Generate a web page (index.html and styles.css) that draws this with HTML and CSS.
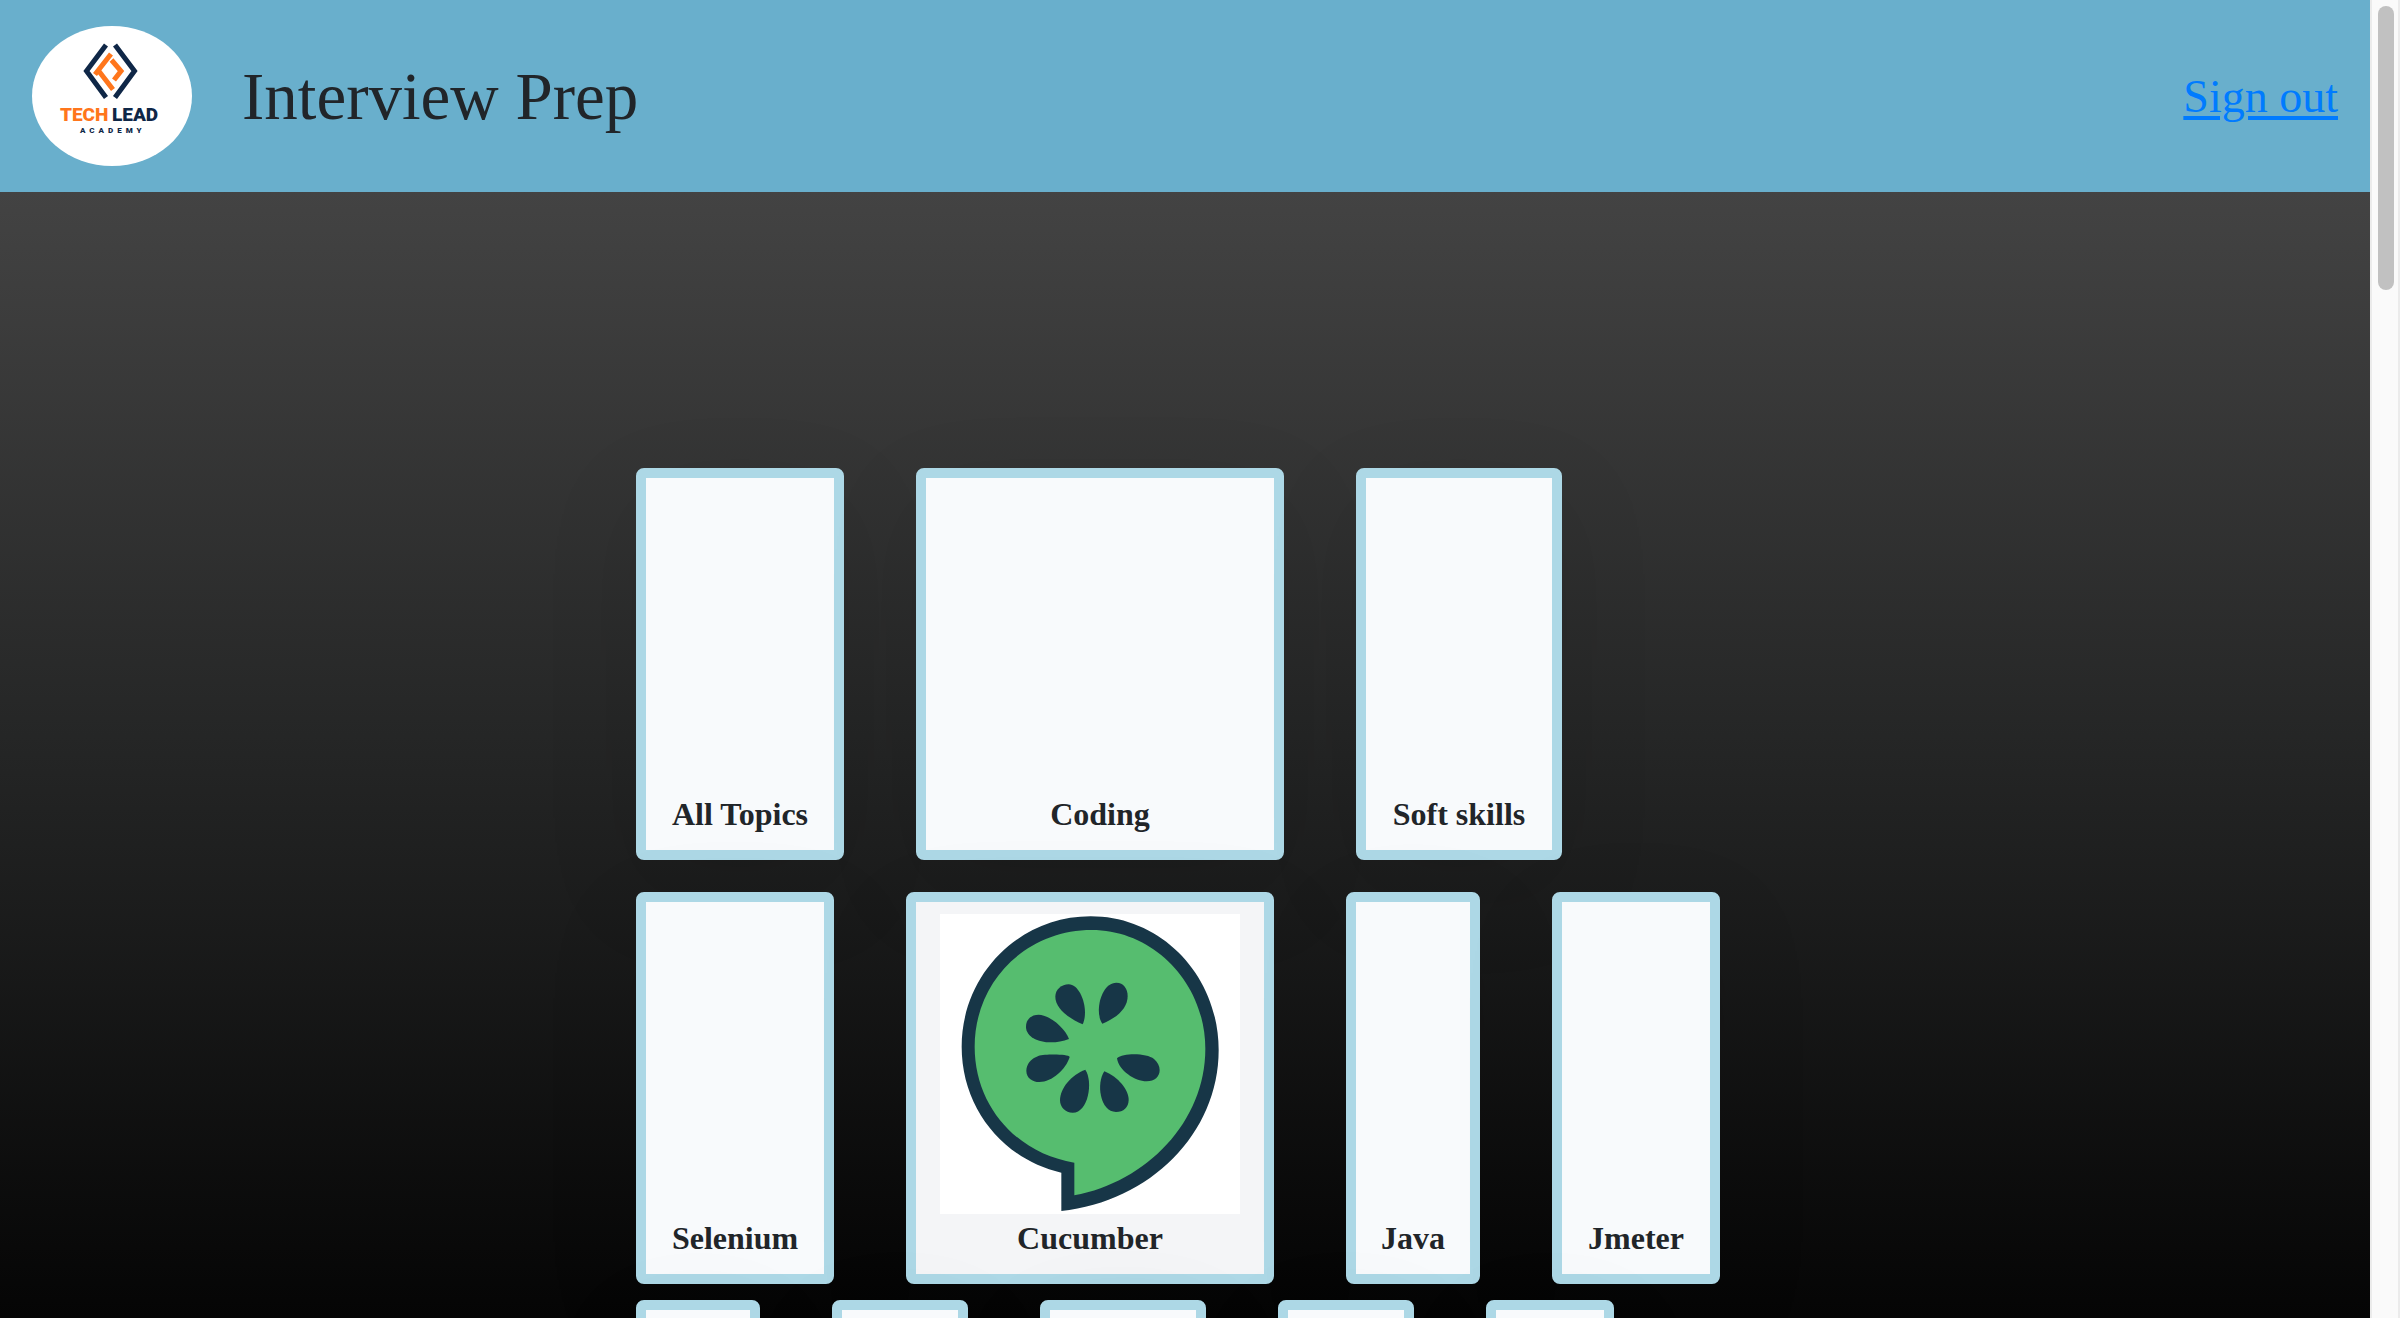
FILE: index.html
```html
<!DOCTYPE html>
<html lang="en">
<head>
<meta charset="utf-8">
<title>Interview Prep</title>
<link rel="stylesheet" href="styles.css">
</head>
<body>
<div class="page">
  <header class="header">
    <svg class="logo" viewBox="0 0 160 140" role="img" aria-label="Tech Lead Academy">
      <g fill="none" stroke-width="5" stroke="#0f2747">
        <path d="M74 19 54.500 45 74 71.500"/>
        <path d="M83 19 102.500 45 83 71.500"/>
      </g>
      <g fill="none" stroke-width="5" stroke="#ff761c">
        <path d="M79 28 63 48.500M66 44 81 63.500"/>
        <path d="M79.500 34 89 45 82 54"/>
      </g>
      <text class="logo-name logo-orange" x="28" y="95">TECH</text>
      <text class="logo-name" x="80" y="95">LEAD</text>
      <text class="logo-sub" x="48" y="107">ACADEMY</text>
    </svg>
    <h1 class="title">Interview Prep</h1>
    <a class="signout" href="#">Sign out</a>
  </header>
  <main class="main">
    <div class="topics">
      <div class="row row-lead">
        <a class="card w-208" href="#">All Topics</a>
        <a class="card w-368" href="#">Coding</a>
        <a class="card w-206" href="#">Soft skills</a>
      </div>
      <div class="row">
        <a class="card w-198" href="#">Selenium</a>
        <a class="card card-picture w-368" href="#">
          <svg class="picture" viewBox="180 132 900 900" aria-hidden="true">
            <path fill="#fff" d="M180 132h900v900H180z"/>
            <path fill="#173647" d="M544 1023V908C370 868 245 715 245 530C245 313 418 139 632 139C846 139 1016 318 1016 540C1016 790 810 995 544 1023Z"/>
            <path fill="#56bd6f" d="M583 976V878C410 850 284 708 284 530C284 332 440 180 635 180C822 180 976 340 976 536C976 755 800 935 583 976Z"/>
            <g fill="#173647">
              <path d="M608 463C560 442 526 412 526 380C526 358 545 343 566 343C602 343 628 420 608 463Z"/>
              <path d="M667 461C642 425 664 338 709 338C731 338 743 356 743 378C743 412 715 442 667 461Z"/>
              <path d="M567 507C556 475 508 434 476 434C454 434 438 448 438 470C438 512 508 530 567 507Z"/>
              <path d="M569 561C565 552 495 552 475 558C452 566 439 584 439 602C439 623 456 636 478 636C516 636 558 598 569 561Z"/>
              <path d="M616 599C640 635 625 728 578 728C556 728 540 712 540 690C540 655 574 614 616 599Z"/>
              <path d="M673 604C648 640 660 726 708 726C730 726 746 712 746 690C746 660 716 622 673 604Z"/>
              <path d="M711 565C730 548 800 549 822 567C833 576 839 588 839 600C839 620 824 634 800 634C765 634 716 602 711 565Z"/>
            </g>
          </svg>
          Cucumber
        </a>
        <a class="card w-134" href="#">Java</a>
        <a class="card w-168" href="#">Jmeter</a>
      </div>
      <div class="row">
        <div class="card w-124"></div>
        <div class="card w-136"></div>
        <div class="card w-166"></div>
        <div class="card w-136"></div>
        <div class="card w-128"></div>
      </div>
    </div>
  </main>
</div>
<div class="scrollbar" aria-hidden="true"><div class="thumb"></div></div>
</body>
</html>
```
FILE: styles.css
```css
* {
  box-sizing: border-box;
}

body {
  display: flex;
  height: 100vh;
  margin: 0;
  overflow: hidden;
  color: #212529;
  font-family: Baskerville, "Liberation Serif", serif;
}

.page {
  display: flex;
  flex: 1;
  flex-direction: column;
  min-width: 0;
}

.header {
  display: flex;
  flex-shrink: 0;
  align-items: center;
  padding: 26px 32px;
  background: #69afcc;
}

.logo {
  width: 160px;
  height: 140px;
  border-radius: 50%;
  background: #fff;
}

.logo-name {
  fill: #0f2747;
  font: 900 19px Roboto, sans-serif;
}

.logo-orange {
  fill: #ff761c;
}

.logo-sub {
  fill: #0f2747;
  font: 900 8px Roboto, sans-serif;
  letter-spacing: 4px;
}

.title {
  margin: 0 auto 0 50px;
  font-size: 67px;
  font-weight: 400;
  line-height: 80px;
}

.signout {
  color: #007bff;
  font-size: 46px;
  text-decoration-thickness: 4px;
  text-underline-offset: 4px;
}

.main {
  flex: 1;
  min-height: 0;
  padding-top: 276px;
  overflow: hidden;
  background: linear-gradient(#434343, #242525 50%, #050505);
}

.topics {
  display: flex;
  flex-direction: column;
  gap: 16px;
  max-width: 1098px;
  margin: 0 auto;
}

.row {
  display: flex;
  gap: 72px;
}

.row-lead {
  margin-bottom: 16px;
}

.card {
  position: relative;
  display: flex;
  flex-direction: column;
  flex-shrink: 0;
  align-items: center;
  justify-content: flex-end;
  height: 392px;
  padding: 12px 0;
  border: 10px solid #add8e6;
  border-radius: 8px;
  background: #f8fafc;
  box-shadow: 0 32px 96px rgba(0, 0, 0, 0.1);
  color: #212529;
  font-size: 32px;
  font-weight: 700;
  line-height: 48px;
  text-decoration: none;
}

.card-picture {
  background: #f4f5f7;
}

.picture {
  width: 300px;
  height: 300px;
}

.w-124 { width: 124px; }
.w-128 { width: 128px; }
.w-134 { width: 134px; }
.w-136 { width: 136px; }
.w-166 { width: 166px; }
.w-168 { width: 168px; }
.w-198 { width: 198px; }
.w-206 { width: 206px; }
.w-208 { width: 208px; }
.w-368 { width: 368px; }

.scrollbar {
  width: 30px;
  padding: 6px 4px 6px 6px;
  border: solid #ebebeb;
  border-width: 0 2px;
  background: #fafafa;
}

.thumb {
  width: 16px;
  height: 284px;
  border-radius: 8px;
  background: #c1c1c1;
}
```
